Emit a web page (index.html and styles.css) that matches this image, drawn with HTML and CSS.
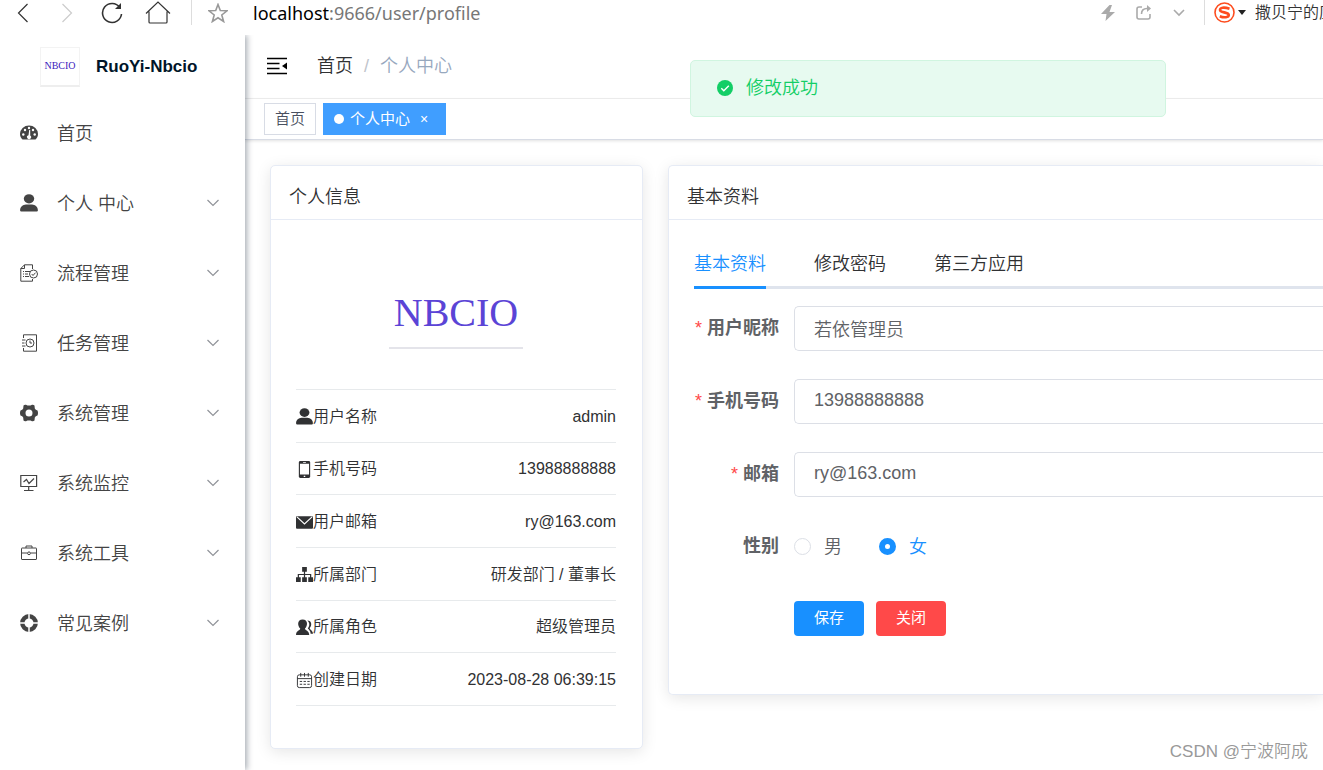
FILE: index.html
```html
<!DOCTYPE html>
<html lang="zh-CN">
<head>
<meta charset="utf-8">
<title>个人中心 - RuoYi-Nbcio</title>
<link rel="stylesheet" href="styles.css">
</head>
<body>
<svg class="sprite" aria-hidden="true">
  <symbol id="user" viewBox="0 0 18 18"><ellipse cx="9" cy="4.800" rx="5.200" ry="4.600"/><path d="M.1 16.500C0 12.500 2.800 10.800 6 10.400h6c3.200.4 6 2.100 5.900 6.100q-.1 1-1.100 1H1.200q-1 0-1.100-1Z"/></symbol>
  <symbol id="chevron" viewBox="0 0 12 8"><path d="M.5 1L6 6.500 11.500 1" fill="none" stroke="currentColor" stroke-width="1.200"/></symbol>
</svg>
<header class="browser">
  <button class="bare back" aria-label="后退"><svg width="12" height="20" viewBox="0 0 12 20"><path d="M10.500 1L1.500 10l9 9" class="line"/></svg></button>
  <button class="bare forward" aria-label="前进"><svg width="12" height="20" viewBox="0 0 12 20"><path d="M1.500 1l9 9-9 9" class="line"/></svg></button>
  <button class="bare reload" aria-label="刷新"><svg width="22" height="22" viewBox="0 0 22 22"><path d="M18.800 5.500A9.500 9.500 0 1 0 20.500 12" class="line thick"/><path d="M20 1v6h-6z" fill="currentColor"/></svg></button>
  <button class="bare home" aria-label="主页"><svg width="26" height="23" viewBox="0 0 26 23"><path d="M1 12.500L13 1l12 11.500M4 10.500V21q0 1 1 1h16q1 0 1-1V10.500" class="line"/></svg></button>
  <span class="divider"></span>
  <button class="bare star" aria-label="收藏"><svg width="20" height="20" viewBox="0 0 20 20"><path d="M10 1.500l2.300 6 6.700.3-5.200 4.200 1.800 6.500-5.600-3.700-5.600 3.700L6.200 12 1 7.800l6.700-.3z" class="line thick"/></svg></button>
  <span class="url"><b>localhost</b>:9666/user/profile</span>
  <span class="tools">
    <svg width="14" height="16" viewBox="0 0 14 16"><path d="M8.500 0L0 9h5.500L4.500 16 14 7H8.500L11 0z" fill="currentColor"/></svg>
    <svg width="16" height="15" viewBox="0 0 16 15"><path d="M6 2H3Q1 2 1 4v8q0 2 2 2h9q2 0 2-2V9M5.500 9q0-5.500 5.500-5.500h2" class="line thick"/><path d="M11 0l4 3.500L11 7z" fill="currentColor"/></svg>
    <svg width="12" height="8" viewBox="0 0 12 8"><path d="M1 1l5 5 5-5" class="line thick"/></svg>
  </span>
  <span class="divider"></span>
  <span class="engine">
    <svg width="21" height="21" viewBox="0 0 21 21"><circle cx="10.500" cy="10.500" r="9.500" fill="none" stroke="#fd4c1e" stroke-width="1.600"/><path d="M15.500 6.800C10 4.800 6 5.500 6 8c0 3 8.800 1.700 8.800 5 0 2.500-4.800 3-9 1.200" fill="none" stroke="#fd4c1e" stroke-width="2.600"/></svg>
    <svg width="8" height="5" viewBox="0 0 8 5"><path d="M0 0h8L4 5z" fill="#222"/></svg>
  </span>
  <span class="hot">撒贝宁的应</span>
</header>

<div class="app">
  <aside class="sidebar">
    <a class="brand" href="#"><span class="logo">NBCIO</span><strong>RuoYi-Nbcio</strong></a>
    <nav>
      <a href="#"><svg class="ico" viewBox="0 0 18 18"><path d="M2.500 15.500C.8 14 0 12 0 10a9 8.500 0 0 1 18 0c0 2-.8 4-2.500 5.500z"/><g fill="#fff"><circle cx="3.300" cy="10.500" r="1.200"/><circle cx="5" cy="6" r="1.200"/><circle cx="9" cy="4" r="1.200"/><circle cx="13" cy="6" r="1.200"/><circle cx="14.700" cy="10.500" r="1.200"/><path d="M9.200 6h1v5.500a2 2 0 1 1-1.700-.3z"/></g></svg><span>首页</span></a>
      <a href="#"><svg class="ico"><use href="#user"/></svg><span>个人 中心</span><svg class="arrow"><use href="#chevron"/></svg></a>
      <a href="#"><svg class="ico outline" viewBox="0 0 18 18"><path d="M12.500 5V.8H4.500L.8 4.500v12.700h11.700V15M4.500.8v3.700H.8M3 7.500h1M5 7.500h5M3 10h1M5 10h3M3 12.500h1M5 12.500h4"/><circle cx="13.500" cy="10" r="4"/><path d="M11.700 10l1.300 1.500 2.500-2.800"/></svg><span>流程管理</span><svg class="arrow"><use href="#chevron"/></svg></a>
      <a href="#"><svg class="ico outline" viewBox="0 0 18 18"><path d="M3.500 4V.8h13v16.400h-13V14M2 6h3.500M2 9h2.500M2 12h3.500"/><circle cx="10" cy="9" r="4"/><path d="M10 6.500V9h2"/></svg><span>任务管理</span><svg class="arrow"><use href="#chevron"/></svg></a>
      <a href="#"><svg class="ico" viewBox="0 0 18 18"><path fill-rule="evenodd" d="M3.500 1.500q1-1 2.500-.7l1.500.8h3L12 .8q1.500-.3 2.500.7l.3 3 1 1.200 1.700.8q1 2.500 0 5l-1.700.8-1 1.200-.3 3q-1 1-2.500.7l-1.500-.8h-3l-1.500.8q-1.500.3-2.500-.7l-.3-3-1-1.200-1.700-.8q-1-2.500 0-5l1.700-.8 1-1.200zM9 5.500a3.500 3.500 0 1 0 0 7 3.500 3.500 0 0 0 0-7z"/></svg><span>系统管理</span><svg class="arrow"><use href="#chevron"/></svg></a>
      <a href="#"><svg class="ico outline" viewBox="0 0 18 18"><path stroke-width="1.200" d="M.8 1.500h15.800v11H.8zM8.700 12.500v4M4 16.500h9.500M3.500 8l3-2.500 2.500 4 5-5"/></svg><span>系统监控</span><svg class="arrow"><use href="#chevron"/></svg></a>
      <a href="#"><svg class="ico outline" viewBox="0 0 18 18"><path d="M2 4h14q.5 0 .5.500v10.500q0 .5-.5.500H2q-.5 0-.5-.5V4.500Q1.500 4 2 4zM6 4V2h6v2M1.500 9h6M10.500 9h6"/><circle cx="9" cy="9.300" r="1.400"/></svg><span>系统工具</span><svg class="arrow"><use href="#chevron"/></svg></a>
      <a href="#"><svg class="ico" viewBox="0 0 18 18"><circle cx="9" cy="9" r="6.700" fill="none" stroke="currentColor" stroke-width="4.400"/><path d="M9 0v5M9 13v5M0 9h5M13 9h5" stroke="#fff" stroke-width="1.500"/></svg><span>常见案例</span><svg class="arrow"><use href="#chevron"/></svg></a>
    </nav>
  </aside>

  <main>
    <div class="navbar">
      <button class="bare fold" aria-label="折叠菜单"><svg width="20" height="18" viewBox="0 0 20 18"><path d="M0 1.500h20M0 6.500h12.500M0 11.500h12.500M0 16.500h20" stroke="currentColor" stroke-width="1.500"/><path d="M20 5.500v7L15 9z"/></svg></button>
      <a href="#">首页</a><i>/</i><span>个人中心</span>
    </div>
    <div class="tags">
      <a class="tag" href="#">首页</a>
      <a class="tag active" href="#"><span class="dot"></span>个人中心<span class="close">×</span></a>
    </div>
    <div class="content">
      <section class="card info">
        <h2>个人信息</h2>
        <div class="info-body">
          <div class="avatar">NBCIO</div>
          <ul>
            <li><svg class="mini"><use href="#user"/></svg>用户名称<span>admin</span></li>
            <li><svg class="mini" viewBox="0 0 18 18"><rect x="3" width="12" height="18" rx="1.500"/><path fill="#fff" d="M4.200 2.800h9.600v11.500H4.200zM7.500 1h3v.8h-3zM8.200 15.500h1.600v1.400H8.200z"/></svg>手机号码<span>13988888888</span></li>
            <li><svg class="mini" viewBox="0 0 18 18"><rect y="2.500" width="18" height="13" rx="1"/><path d="M1 3l8 7.500L17 3" fill="none" stroke="#fff" stroke-width="1.200"/></svg>用户邮箱<span>ry@163.com</span></li>
            <li><svg class="mini" viewBox="0 0 18 18"><path d="M6.500 1h5v5h-5zM0 12h5v5H0zM6.500 12h5v5h-5zM13 12h5v5h-5z"/><path d="M9 5v8M2.500 13V9h13v4" fill="none" stroke="currentColor" stroke-width="1.300"/></svg>所属部门<span>研发部门 / 董事长</span></li>
            <li><svg class="mini" viewBox="0 0 18 18"><path d="M7 .5c6 0 5.500 7 2.500 9.500 0 2 4.500 2 4.500 7H0c0-5 4.500-5 4.500-7C1.500 7.500 1 .5 7 .5zM12 1.500c5 0 5 5.500 2.500 8 0 2 3.500 2.500 3.500 6h-2.500c0-3-2-4.500-3-5.500 2-2.500 2.500-6-.5-8.500z"/></svg>所属角色<span>超级管理员</span></li>
            <li><svg class="mini outline" viewBox="0 0 18 18"><rect x="1.500" y="3" width="15" height="13.500" rx="2"/><path d="M1.500 7h15M5 1v4M9 1v4M13 1v4M4 10h2.500M8 10h2.500M12 10h2.500M4 13h2.500M8 13h2.500M12 13h2.500"/></svg>创建日期<span>2023-08-28 06:39:15</span></li>
          </ul>
        </div>
      </section>

      <section class="card profile">
        <h2>基本资料</h2>
        <div class="profile-body">
          <div class="tabs" role="tablist">
            <button class="bare tab selected" role="tab" aria-selected="true">基本资料</button>
            <button class="bare tab" role="tab" aria-selected="false">修改密码</button>
            <button class="bare tab" role="tab" aria-selected="false">第三方应用</button>
          </div>
          <form>
            <label class="name required" for="nick">用户昵称</label><input class="field" id="nick" type="text" value="若依管理员">
            <label class="name required" for="phone">手机号码</label><input class="field" id="phone" type="text" value="13988888888">
            <label class="name required" for="mail">邮箱</label><input class="field" id="mail" type="text" value="ry@163.com">
            <span class="name" id="sex">性别</span>
            <div class="radios" role="radiogroup" aria-labelledby="sex">
              <label><input type="radio" name="sex">男</label>
              <label><input type="radio" name="sex" checked>女</label>
            </div>
            <div class="actions"><button type="button" class="btn">保存</button><button type="button" class="btn danger">关闭</button></div>
          </form>
        </div>
      </section>
    </div>
  </main>
</div>

<div class="message" role="alert"><svg width="16" height="16" viewBox="0 0 16 16"><circle cx="8" cy="8" r="8" fill="#13ce66"/><path d="M4.300 8.200l2.500 2.500 5-5" fill="none" stroke="#fff" stroke-width="1.400"/></svg>修改成功</div>
<div class="watermark">CSDN @宁波阿成</div>
</body>
</html>
```
FILE: styles.css
```css
* { box-sizing: border-box; }
body {
  margin: 0;
  min-height: 100vh;
  display: flex;
  flex-direction: column;
  overflow: hidden;
  background: #fff;
  color: #303133;
  font: 350 18px/24px "Liberation Sans", "Noto Sans CJK SC", sans-serif;
}
a { color: inherit; text-decoration: none; }
svg { flex: none; fill: currentColor; }
.sprite { position: absolute; width: 0; height: 0; }
.bare { padding: 0; border: 0; background: none; color: inherit; font: inherit; display: flex; }
.line { fill: none; stroke: currentColor; stroke-width: 1.2; }
.thick { stroke-width: 1.6; }
.outline { fill: none; stroke: currentColor; stroke-width: 1; }

.browser { height: 35px; padding: 0 0 10px 17px; display: flex; align-items: center; color: #333; white-space: nowrap; }
.forward { margin-left: 32px; color: #ccc; }
.reload { margin-left: 28px; }
.home { margin-left: 22px; }
.divider { width: 1px; height: 25px; background: #ddd; }
.home + .divider { margin-left: 20px; }
.star { margin-left: 16px; color: #999; }
.url { margin-left: 25px; font: 400 18px/24px "Noto Sans", sans-serif; color: #777; }
.url b { font-weight: 400; color: #000; }
.tools { margin-left: auto; margin-right: 19px; display: flex; align-items: center; gap: 21px; color: #aaa; }
.engine { margin-left: 9px; display: flex; align-items: center; gap: 3px; }
.hot { width: 68px; margin-left: 9px; overflow: hidden; font-size: 16px; }

.app { flex: 1; display: flex; }
.sidebar { width: 245px; flex: none; z-index: 1; background: #fff; box-shadow: 2px 0 6px rgba(0, 21, 41, .35); clip-path: inset(0 -12px 0 0); }
.brand { height: 63px; padding-left: 40px; display: flex; align-items: center; gap: 16px; color: #001529; font-size: 17px; }
.brand strong { font-weight: 700; }
.logo { width: 40px; height: 40px; display: grid; place-items: center; border: 1px solid #f3f3f3; border-bottom: 2px solid #eee; color: #3a22bd; font: 10px/16px "Liberation Serif", serif; }
nav a { height: 70px; padding: 0 26px 0 20px; display: flex; align-items: center; color: #444; }
nav span { padding-top: 2px; }
.ico { width: 18px; height: 18px; margin-right: 19px; }
.arrow { width: 12px; height: 8px; margin-left: auto; color: #909399; }

main { flex: 1; min-width: 0; }
.navbar { height: 64px; padding: 0 0 2px 22px; display: flex; align-items: center; border-bottom: 1px solid #f0f0f0; }
.fold { margin-right: 30px; color: #000; }
.navbar i { margin: 0 11px; font-style: normal; color: #c0c4cc; }
.navbar span { color: #97a8be; }
.tags { height: 41px; padding: 4px 19px; display: flex; gap: 7px; border-bottom: 1px solid #d8dce5; box-shadow: 0 1px 3px rgba(0, 0, 0, .12); font-size: 15px; }
.tag { height: 32px; padding: 0 10px; display: flex; align-items: center; border: 1px solid #d8dce5; color: #495060; }
.active { background: #409eff; border-color: #409eff; color: #fff; font-weight: 400; }
.dot { width: 10px; height: 10px; margin-right: 6px; border-radius: 50%; background: #fff; }
.close { width: 14px; margin: 0 4px 0 7px; text-align: center; font-size: 14px; }

.content { padding: 25px 0 0 25px; display: flex; align-items: flex-start; gap: 25px; }
.card { border: 1px solid #e6ebf5; border-radius: 5px; background: #fff; box-shadow: 0 3px 15px rgba(0, 0, 0, .1); }
.card h2 { margin: 0; padding: 19px 18px 10px; border-bottom: 1px solid #e6ebf5; font: inherit; }
.info { width: 373px; flex: none; }
.info-body { padding: 25px 26px 42px 25px; }
.avatar { width: 134px; height: 104px; margin: 0 auto 40px; padding-top: 45px; border-bottom: 2px solid #e4e4ea; text-align: center; color: #5b44d6; font: 40px/46px "Liberation Serif", serif; }
.info ul { margin: 0; padding: 0; min-height: 317px; display: grid; grid-auto-rows: 1fr; list-style: none; border-top: 1px solid #e7eaec; font-size: 16px; }
.info li { padding-top: 2px; display: flex; align-items: center; border-bottom: 1px solid #e7eaec; }
.info li span { margin-left: auto; }
.mini { width: 17px; height: 17px; }

.profile { flex: 1; min-width: 0; border-right: 0; border-radius: 5px 0 0 5px; }
.profile-body { padding: 25px 0 58px 25px; }
.tabs { display: flex; gap: 48px; border-bottom: 3px solid #dfe4ed; }
.tab { height: 44px; padding-top: 7px; margin-bottom: -3px; border-bottom: 3px solid transparent; }
.selected { color: #1890ff; border-color: #1890ff; }
form { padding-top: 17px; display: grid; grid-template-columns: 85px 1fr; column-gap: 15px; row-gap: 28px; align-items: center; color: #606266; }
.name { padding-bottom: 1px; text-align: right; font-weight: 700; }
.required::before { content: "*"; margin-right: 5px; color: #ff4949; font-weight: 400; }
.field { width: 100%; height: 45px; padding: 0 19px 2px; border: 1px solid #dcdfe6; border-right: 0; border-radius: 5px 0 0 5px; background: #fff; color: #606266; font: inherit; }
.radios { height: 43px; display: flex; align-items: center; gap: 37px; }
.radios label { display: flex; align-items: center; gap: 13px; }
.radios label:has(:checked) { color: #1890ff; }
.radios input { appearance: none; width: 17px; height: 17px; margin: 0; border: 1px solid #dcdfe6; border-radius: 50%; background: #fff; }
.radios input:checked { border: 6px solid #1890ff; }
.actions { grid-column: 2; display: flex; gap: 12px; padding-top: 5px; }
.btn { width: 70px; height: 35px; padding: 0 0 1px; border: 0; border-radius: 4px; background: #1890ff; color: #fff; font: inherit; font-size: 15px; font-weight: 400; }
.danger { background: #ff4949; }

.message { position: absolute; z-index: 2; top: 60px; left: 690px; width: 476px; height: 57px; padding: 0 26px 2px; display: flex; align-items: center; gap: 13px; border: 1px solid #d0f5e0; border-radius: 5px; background: #e7faf0; color: #13ce66; }
.watermark { position: absolute; right: 15px; bottom: 6px; color: #999; font-size: 17px; }
```
